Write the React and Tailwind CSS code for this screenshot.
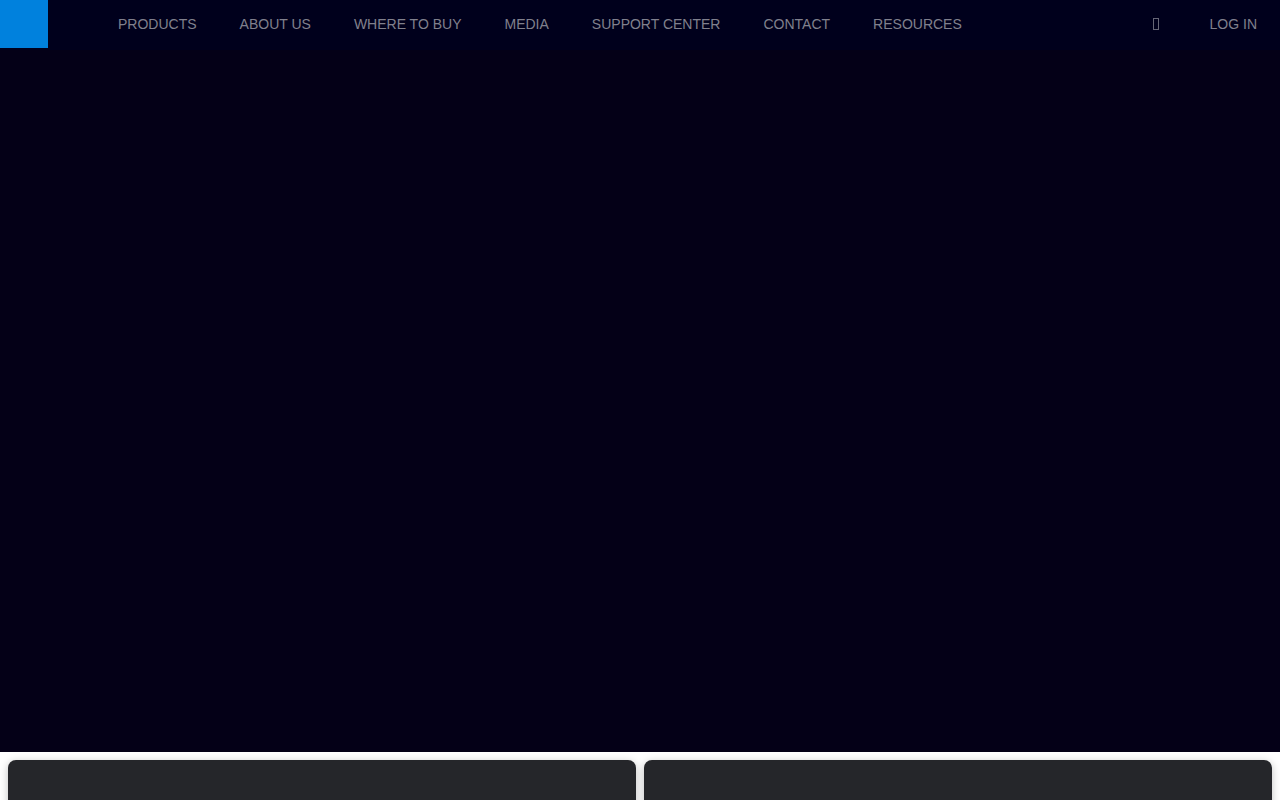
const links = [
  "Products",
  "About us",
  "Where to buy",
  "Media",
  "Support center",
  "Contact",
  "Resources",
];

function NavBar() {
  return (
    <header className="flex h-[50px] items-start bg-[#00001c] text-sm text-[#80808d]">
      <a href="#home" aria-label="Home" className="size-12 shrink-0 bg-[#0081dd]" />
      <nav className="ml-[70px] flex h-12 items-center gap-[43px]">
        {links.map((label) => (
          <a key={label} href="#" className="leading-5 whitespace-nowrap uppercase">
            {label}
          </a>
        ))}
      </nav>
      <div className="ml-auto flex h-12 items-center gap-[51px] pr-[23px]">
        <button type="button" aria-label="Search">
          <svg width="6" height="12" viewBox="0 0 6 12" fill="none" className="block">
            <rect x="0.5" y="0.5" width="5" height="11" stroke="currentColor" strokeOpacity="0.8" />
          </svg>
        </button>
        <a href="#" className="leading-5 uppercase">
          Log in
        </a>
      </div>
    </header>
  );
}

function Card() {
  return (
    <article className="h-80 rounded-lg bg-[#25262a] shadow-[0_2px_8px_rgba(0,0,0,0.25)]" />
  );
}

export default function App() {
  return (
    <div className="bg-white font-['Liberation_Sans',Arial,sans-serif]">
      <div className="flex h-[calc(100vh-48px)] flex-col bg-[#040017]">
        <NavBar />
      </div>
      <main className="grid grid-cols-2 gap-2 p-2">
        <Card />
        <Card />
      </main>
    </div>
  );
}
